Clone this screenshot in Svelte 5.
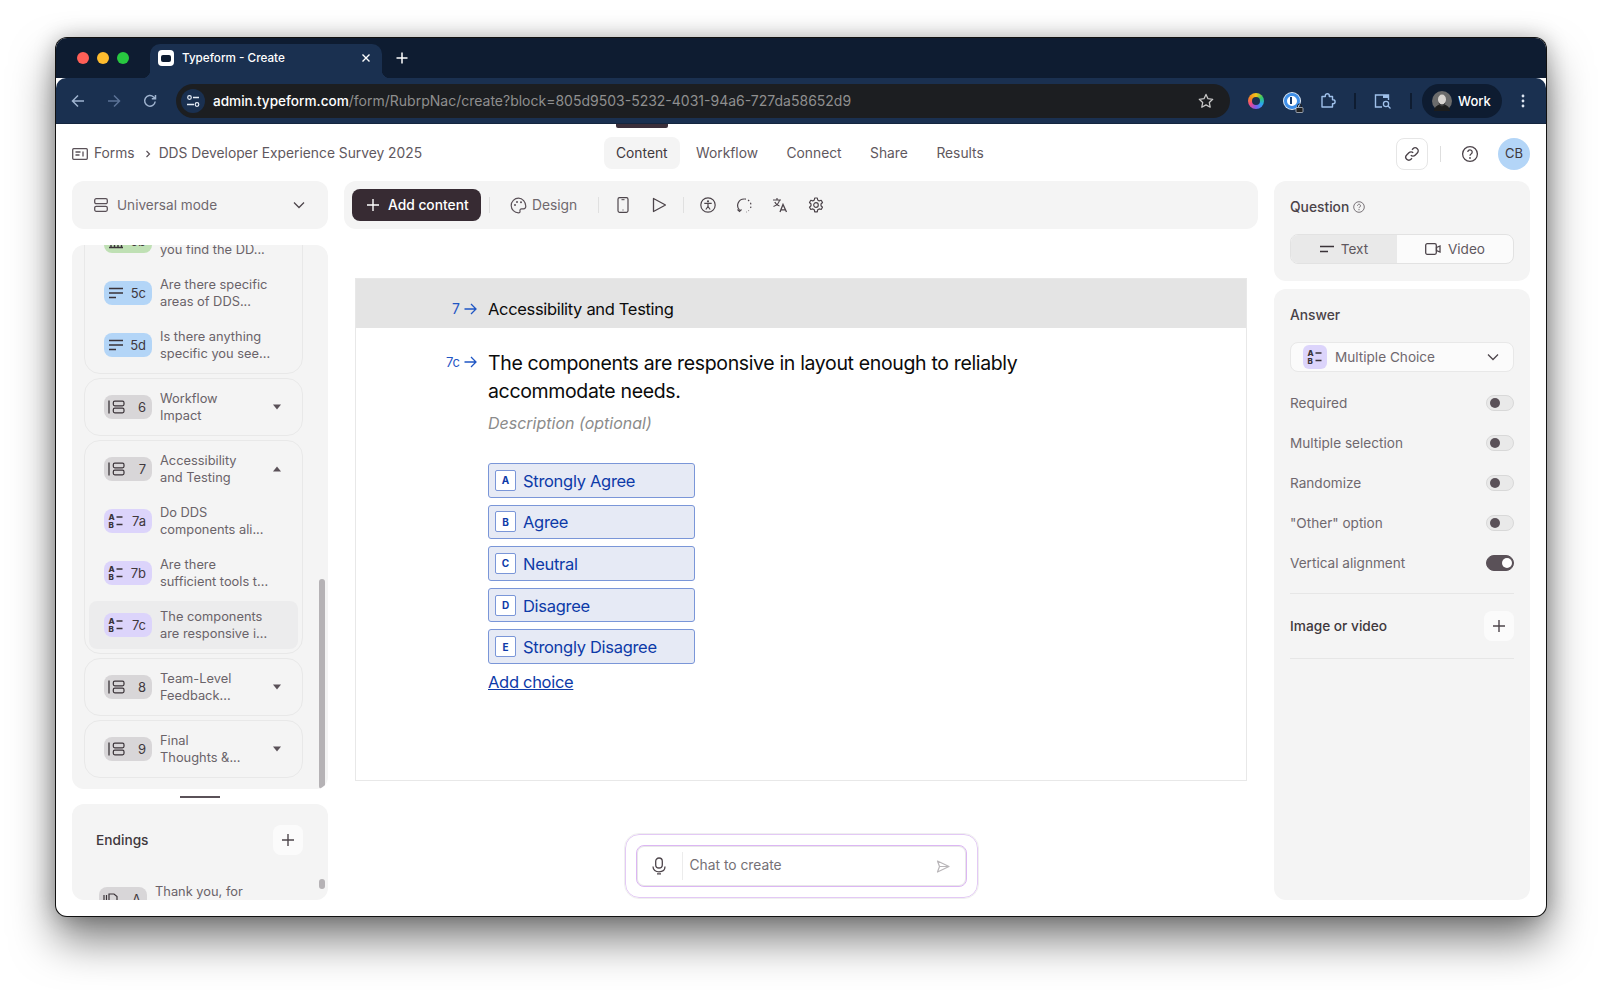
<script>
  const introRows = [
    { t: 'rate', n: '5b', a: '\u00a0', b: 'you find the DD...' },
    { t: 'text', n: '5c', a: 'Are there specific', b: 'areas of DDS...' },
    { t: 'text', n: '5d', a: 'Is there anything', b: 'specific you see...' }
  ];
  const subRows = [
    { t: 'mc', n: '7a', a: 'Do DDS', b: 'components ali...' },
    { t: 'mc', n: '7b', a: 'Are there', b: 'sufficient tools t...' },
    { t: 'mc', n: '7c', a: 'The components', b: 'are responsive i...', on: true }
  ];
  const choices = [
    ['A', 'Strongly Agree'], ['B', 'Agree'], ['C', 'Neutral'], ['D', 'Disagree'], ['E', 'Strongly Disagree']
  ];
  const toggles = [
    ['Required', false], ['Multiple selection', false], ['Randomize', false], ['"Other" option', false], ['Vertical alignment', true]
  ];
  const nav = ['Content', 'Workflow', 'Connect', 'Share', 'Results'];
</script>

{#snippet mcIcon()}
  <svg width="16" height="16" viewBox="0 0 16 16" class="ico">
    <text x="0.5" y="7" class="mini">A</text><text x="0.5" y="14.5" class="mini">B</text>
    <path d="M8.500 4h6M8.500 11.500h6" stroke="#3a3338" stroke-width="1.500" fill="none"/>
  </svg>
{/snippet}

{#snippet chip(type, n)}
  <span class="chip {type}">
    {#if type === 'text'}
      <svg width="16" height="16" viewBox="0 0 16 16" class="ico"><path d="M1 3.500h14M1 8h14M1 12.500h7" stroke="#3a3338" stroke-width="1.400" fill="none"/></svg>
    {:else if type === 'group'}
      <svg width="17" height="16" viewBox="0 0 17 16" class="ico"><path d="M1 1.500v13" stroke="#3a3338" stroke-width="1.300"/><rect x="5.300" y="2.200" width="10.700" height="4.600" rx="1.500" fill="none" stroke="#3a3338" stroke-width="1.200"/><rect x="5.300" y="9.200" width="10.700" height="4.600" rx="1.500" fill="none" stroke="#3a3338" stroke-width="1.200"/></svg>
    {:else if type === 'mc'}
      {@render mcIcon()}
    {:else if type === 'rate'}
      <svg width="16" height="16" viewBox="0 0 16 16" class="ico"><path d="M3 6v8M6.500 6v8M10 6v8M13.500 6v8M1 14.500h14" stroke="#3a3338" stroke-width="1.400" fill="none"/></svg>
    {:else}
      <svg width="16" height="16" viewBox="0 0 16 16" class="ico"><path d="M1 4v9M3.500 4v9" stroke="#3a3338" stroke-width="1.200"/><path d="M6 3h5l3 2.500V13H6z" fill="none" stroke="#3a3338" stroke-width="1.200"/></svg>
    {/if}
    <span class="num">{n}</span>
  </span>
{/snippet}

{#snippet row(r)}
  <div class="row" class:on={r.on}>
    {@render chip(r.t, r.n)}
    <span class="rowtext"><span>{r.a}</span><span>{r.b}</span></span>
  </div>
{/snippet}

{#snippet group(n, a, b, open)}
  <div class="row">
    {@render chip('group', n)}
    <span class="rowtext"><span>{a}</span><span>{b}</span></span>
    <svg class="caret" width="10" height="6" viewBox="0 0 10 6">
      {#if open}<path d="M5 .5 9 5.500H1z" fill="#5a5158"/>{:else}<path d="M1 .5h8L5 5.500z" fill="#5a5158"/>{/if}
    </svg>
  </div>
{/snippet}

{#snippet plus()}
  <svg width="14" height="14" viewBox="0 0 14 14"><path d="M7 1v12M1 7h12" stroke="currentColor" stroke-width="1.400" fill="none"/></svg>
{/snippet}

{#snippet arrow()}
  <svg width="13" height="12" viewBox="0 0 13 12"><path d="M.5 6h11.500M7 1l5 5-5 5" stroke="#1f56c4" stroke-width="1.300" fill="none"/></svg>
{/snippet}

<div class="window">
  <div class="tabstrip">
    <div class="lights"><i class="r"></i><i class="y"></i><i class="g"></i></div>
    <div class="tab">
      <span class="fav"><b></b></span>
      <span class="tabtitle">Typeform - Create</span>
      <svg width="10" height="10" viewBox="0 0 10 10"><path d="M1.500 1.500l7 7M8.500 1.500l-7 7" stroke="#fff" stroke-width="1.400"/></svg>
    </div>
    <svg class="newtab" width="12" height="12" viewBox="0 0 12 12"><path d="M6 .5v11M.5 6h11" stroke="#fff" stroke-width="1.500"/></svg>
  </div>

  <div class="toolbar">
    <div class="navbtns">
      <svg width="14" height="14" viewBox="0 0 14 14"><path d="M13 7H1.500M7 1.500 1.500 7 7 12.500" stroke="#9fb3cf" stroke-width="1.500" fill="none"/></svg>
      <svg width="14" height="14" viewBox="0 0 14 14"><path d="M1 7h11.500M7 1.500 12.500 7 7 12.500" stroke="#5b7296" stroke-width="1.500" fill="none"/></svg>
      <svg width="14" height="14" viewBox="0 0 14 14"><path d="M12.200 7.500A5.300 5.300 0 1 1 10.600 3L12.500 4.800M12.500 1v3.800H8.800" stroke="#9fb3cf" stroke-width="1.500" fill="none"/></svg>
    </div>
    <div class="urlbar">
      <span class="sitechip">
        <svg width="14" height="14" viewBox="0 0 14 14"><circle cx="3.500" cy="3.500" r="1.800" fill="none" stroke="#e6edf7" stroke-width="1.200"/><path d="M7 3.500h6M1 10.500h7" stroke="#e6edf7" stroke-width="1.400"/><circle cx="11" cy="10.500" r="1.800" fill="none" stroke="#e6edf7" stroke-width="1.200"/></svg>
      </span>
      <span class="url"><b>admin.typeform.com</b><span>/form/RubrpNac/create?block=805d9503-5232-4031-94a6-727da58652d9</span></span>
      <svg width="16" height="16" viewBox="0 0 16 16"><path d="M8 1.400l2 4.300 4.700.6-3.400 3.200.9 4.700L8 11.900 3.800 14.200l.9-4.700L1.300 6.300 6 5.700z" fill="none" stroke="#c7c7c7" stroke-width="1.300" stroke-linejoin="round"/></svg>
    </div>
    <div class="exts">
      <span class="wheel"></span>
      <span class="onepw"><i></i><svg width="9" height="10" viewBox="0 0 9 10"><path d="M2.500 4.500V3a2 2 0 0 1 4 0v1.500" stroke="#222" fill="none"/><rect x="1" y="4.500" width="7" height="5" rx="1" fill="#222" stroke="#e8eef6" stroke-width=".6"/></svg></span>
      <svg width="16" height="17" viewBox="0 0 16 17"><path d="M2 4.500h3.300v-.8a2 2 0 0 1 4 0v.8h3.200v3.200h.6a2 2 0 0 1 0 4h-.6v3.300H2z" fill="none" stroke="#9fc0ea" stroke-width="1.400" stroke-linejoin="round"/></svg>
      <i class="tsep"></i>
      <svg width="18" height="16" viewBox="0 0 18 16"><path d="M8 14H1.500V2h13v5" fill="none" stroke="#9fc0ea" stroke-width="1.400"/><rect x="9" y="2" width="6" height="3" fill="#9fc0ea"/><circle cx="12" cy="11" r="2.600" fill="none" stroke="#9fc0ea" stroke-width="1.300"/><path d="M14 13l2.500 2.500" stroke="#9fc0ea" stroke-width="1.300"/></svg>
      <i class="tsep"></i>
      <span class="profile">
        <svg width="20" height="20" viewBox="0 0 20 20"><circle cx="10" cy="10" r="10" fill="#6b6b6b"/><path d="M2 20c.5-5 4-6.500 8-6.500s7.500 1.500 8 6.500z" fill="#1d1d1d"/><ellipse cx="10" cy="8.500" rx="4" ry="5" fill="#d8d4d0"/><path d="M6.500 10c1 5 6 5 7 0l-.5 4-3 1.500L7 14z" fill="#3a3a3a"/></svg>
        <span>Work</span>
      </span>
      <svg class="dots" width="4" height="14" viewBox="0 0 4 14"><circle cx="2" cy="2" r="1.400" fill="#dde6f2"/><circle cx="2" cy="7" r="1.400" fill="#dde6f2"/><circle cx="2" cy="12" r="1.400" fill="#dde6f2"/></svg>
    </div>
  </div>

  <div class="page">
    <header class="topbar">
      <div class="crumbs">
        <svg width="16" height="14" viewBox="0 0 16 14"><rect x=".7" y="1.700" width="14.600" height="10.600" rx="1" fill="none" stroke="#5a5158" stroke-width="1.300"/><path d="M3.500 5h5M3.500 8h4M11 4.500v5" stroke="#5a5158" stroke-width="1.300" fill="none"/></svg>
        <span class="forms">Forms</span>
        <svg class="sep" width="6" height="8" viewBox="0 0 6 8"><path d="M1.500 1l3 3-3 3" stroke="#5a5158" stroke-width="1.200" fill="none"/></svg>
        <span>DDS Developer Experience Survey 2025</span>
      </div>
      <nav class="tabs">
        {#each nav as item, i}
          <span class="navitem" class:active={i === 0}>{item}</span>
        {/each}
      </nav>
      <div class="topright">
        <span class="linkbtn"><svg width="16" height="16" viewBox="0 0 16 16"><path d="M6.800 9.200a3 3 0 0 0 4.300 0l2.200-2.200a3 3 0 0 0-4.300-4.300L8 3.700M9.200 6.800a3 3 0 0 0-4.300 0L2.700 9a3 3 0 0 0 4.300 4.300L8 12.300" fill="none" stroke="#4d454b" stroke-width="1.400"/></svg></span>
        <i class="vsep"></i>
        <svg width="18" height="18" viewBox="0 0 18 18"><circle cx="9" cy="9" r="7.400" fill="none" stroke="#4d454b" stroke-width="1.300"/><path d="M6.800 7a2.200 2.200 0 1 1 3.300 2c-.7.400-1.100.8-1.100 1.700" fill="none" stroke="#4d454b" stroke-width="1.300"/><circle cx="9" cy="13" r=".9" fill="#4d454b"/></svg>
        <span class="avatar">CB</span>
      </div>
    </header>

    <div class="columns">
      <aside class="leftcol">
        <div class="panel modebar">
          <svg width="14" height="14" viewBox="0 0 14 14"><rect x=".7" y=".7" width="12.600" height="5" rx="1.500" fill="none" stroke="#5a5158" stroke-width="1.300"/><rect x=".7" y="8.300" width="12.600" height="5" rx="1.500" fill="none" stroke="#5a5158" stroke-width="1.300"/></svg>
          <span class="lift">Universal mode</span>
          <svg class="chev" width="12" height="8" viewBox="0 0 12 8"><path d="M1 1.500l5 5 5-5" stroke="#4d454b" stroke-width="1.300" fill="none"/></svg>
        </div>
        <div class="panel listpanel">
          <div class="list">
            <div class="grp">{#each introRows as r}{@render row(r)}{/each}</div>
            <div class="grp">{@render group('6', 'Workflow', 'Impact', false)}</div>
            <div class="grp">
              {@render group('7', 'Accessibility', 'and Testing', true)}
              {#each subRows as r}{@render row(r)}{/each}
            </div>
            <div class="grp">{@render group('8', 'Team-Level', 'Feedback...', false)}</div>
            <div class="grp">{@render group('9', 'Final', 'Thoughts &...', false)}</div>
          </div>
          <i class="thumb listthumb"></i>
        </div>
        <i class="handle"></i>
        <div class="panel endings">
          <div class="endhead">
            <span class="strong lift">Endings</span>
            <span class="plusbtn">{@render plus()}</span>
          </div>
          <div class="endrow">
            {@render chip('end', 'A')}
            <span class="rowtext"><span>Thank you, for</span></span>
          </div>
          <i class="thumb endthumb"></i>
        </div>
      </aside>

      <main class="center">
        <div class="panel actions">
          <span class="addbtn">{@render plus()}<span class="lift">Add content</span></span>
          <i class="asep"></i>
          <span class="design">
            <svg width="17" height="17" viewBox="0 0 17 17"><path d="M8.500 1.200a7.300 7.300 0 1 0 0 14.600c1.200 0 1.700-.8 1.500-1.700-.3-1.200.3-2.300 1.700-2.300h1.800c1.300 0 2.300-1 2.300-2.500 0-4.400-3.300-8.100-7.300-8.100z" fill="none" stroke="#5a5158" stroke-width="1.200"/><circle cx="5" cy="8" r="1" fill="#5a5158"/><circle cx="7" cy="5" r="1" fill="#5a5158"/><circle cx="11" cy="5.200" r="1" fill="#5a5158"/></svg>
            <span class="lift">Design</span>
          </span>
          <i class="asep"></i>
          <span class="tool first"><svg width="12" height="16" viewBox="0 0 12 16"><rect x="1" y=".7" width="10" height="14.600" rx="1.500" fill="none" stroke="#4d454b" stroke-width="1.200"/><path d="M4.500 2.700h3M5.500 13h1" stroke="#4d454b" stroke-width="1"/></svg></span>
          <span class="tool"><svg width="15" height="16" viewBox="0 0 15 16"><path d="M1.500 1.500 13.500 8 1.500 14.500z" fill="none" stroke="#4d454b" stroke-width="1.300" stroke-linejoin="round"/></svg></span>
          <i class="asep tight"></i>
          <span class="tool"><svg width="16" height="16" viewBox="0 0 16 16"><circle cx="8" cy="8" r="7.200" fill="none" stroke="#4d454b" stroke-width="1.200"/><circle cx="8" cy="4.300" r="1.100" fill="#4d454b"/><path d="M4.300 6.300h7.400M8 6.500V9.500M8 9.500 5.800 12.500M8 9.500l2.200 3" stroke="#4d454b" stroke-width="1.200" fill="none"/></svg></span>
          <span class="tool"><svg width="17" height="17" viewBox="0 0 17 17"><path d="M3.500 13A6.500 6.500 0 0 1 8.500 2" fill="none" stroke="#4d454b" stroke-width="1.200"/><path d="M8.500 2a6.500 6.500 0 0 1 6 9M13 13.500l-.5.300M10.500 15h-.5" fill="none" stroke="#4d454b" stroke-width="1.200" stroke-dasharray="1.500 2.200"/><path d="M1.500 11.500l2 2 2-2" fill="none" stroke="#4d454b" stroke-width="1.200" transform="translate(0 1)"/></svg></span>
          <span class="tool"><svg width="16" height="16" viewBox="0 0 16 16"><path d="M1 3h8M5 1v2M7.500 3C7 6 4.500 8.500 1.500 9.500M2.800 5c.8 2 2.700 3.500 4.700 4" fill="none" stroke="#4d454b" stroke-width="1.200"/><path d="M8 15l3-7.500 3.500 7.500M9 12.800h4.500" fill="none" stroke="#4d454b" stroke-width="1.300"/></svg></span>
          <span class="tool"><svg width="16" height="16" viewBox="0 0 16 16"><path d="M6.700 1h2.600l.4 2 1.500.9 2-.6 1.300 2.200-1.500 1.500v1.800l1.500 1.400-1.300 2.300-2-.6-1.500.9-.4 2H6.700l-.4-2-1.500-.9-2 .6L1.500 10.200 3 8.800V7L1.500 5.500l1.300-2.200 2 .6 1.500-.9z" fill="none" stroke="#4d454b" stroke-width="1.200" stroke-linejoin="round"/><circle cx="8" cy="8" r="2.300" fill="none" stroke="#4d454b" stroke-width="1.200"/></svg></span>
        </div>

        <section class="canvas">
          <div class="band">
            <span class="ref"><span class="refnum">7</span>{@render arrow()}</span>
            <span class="bandtitle">Accessibility and Testing</span>
          </div>
          <div class="qrow">
            <span class="ref qref"><span class="refnum small">7c</span>{@render arrow()}</span>
            <div class="qbody">
              <h1>The components are responsive in layout enough to reliably<br />accommodate needs.</h1>
              <p class="desc">Description (optional)</p>
              <div class="choices">
                {#each choices as [k, label]}
                  <div class="choice"><span class="key">{k}</span><span class="choicelabel">{label}</span></div>
                {/each}
              </div>
              <span class="addchoice">Add choice</span>
            </div>
          </div>
        </section>

        <div class="chatwrap">
          <div class="chat">
            <span class="mic"><svg width="16" height="18" viewBox="0 0 16 18"><rect x="4.700" y="1" width="6.600" height="10" rx="3.300" fill="none" stroke="#4d454b" stroke-width="1.300"/><path d="M2 9.500c0 3.500 2.700 5.300 6 5.300s6-1.800 6-5.300M6 16.800h4" fill="none" stroke="#4d454b" stroke-width="1.300"/></svg></span>
            <span class="chattext">Chat to create</span>
            <svg width="14" height="13" viewBox="0 0 14 13"><path d="M1.500 1 13 6.500 1.500 12 3.500 6.500zM3.500 6.500H13" fill="none" stroke="#b9b6b9" stroke-width="1.200" stroke-linejoin="round"/></svg>
          </div>
        </div>
      </main>

      <aside class="rightcol">
        <div class="panel questionp">
          <div class="ptitle"><span class="lift">Question</span>
            <svg width="12" height="12" viewBox="0 0 12 12"><circle cx="6" cy="6" r="5.300" fill="none" stroke="#6b646a" stroke-width=".9"/><path d="M4.500 4.700A1.500 1.500 0 1 1 6.800 6c-.5.300-.8.500-.8 1.100" fill="none" stroke="#6b646a" stroke-width=".9"/><circle cx="6" cy="8.700" r=".6" fill="#6b646a"/></svg>
          </div>
          <div class="segment">
            <span class="seg sel"><svg width="14" height="8" viewBox="0 0 14 8"><path d="M0 1.500h14M0 6.500h8" stroke="#3a3338" stroke-width="1.300"/></svg><span class="lift">Text</span></span>
            <span class="seg"><svg width="16" height="12" viewBox="0 0 16 12"><rect x=".7" y=".7" width="10.600" height="10.600" rx="1.500" fill="none" stroke="#4d454b" stroke-width="1.300"/><path d="M11.500 4.500 15 3v6l-3.500-1.500z" fill="none" stroke="#4d454b" stroke-width="1.300"/></svg><span class="lift">Video</span></span>
          </div>
        </div>
        <div class="panel answerp">
          <div class="ptitle"><span class="lift">Answer</span></div>
          <div class="select">
            <span class="mcbadge">{@render mcIcon()}</span>
            <span class="lift">Multiple Choice</span>
            <svg class="chev" width="12" height="8" viewBox="0 0 12 8"><path d="M1 1.500l5 5 5-5" stroke="#4d454b" stroke-width="1.300" fill="none"/></svg>
          </div>
          <div class="toggles">
            {#each toggles as [label, on]}
              <div class="togglerow"><span class="lift">{label}</span><i class="toggle" class:ison={on}><b></b></i></div>
            {/each}
          </div>
          <div class="media">
            <span class="strong lift">Image or video</span>
            <span class="plusbtn">{@render plus()}</span>
          </div>
        </div>
      </aside>
    </div>
  </div>
</div>

<style>
  :global(body) { margin: 0; background: #fff; overflow: hidden; }
  :global(#app) { height: 990px; }
  * { box-sizing: border-box; }
  i { display: block; font-style: normal; }
  svg { display: block; flex: none; }
  .lift { margin-top: -1px; }

  .window {
    position: relative; top: 38px; left: 56px; width: 1490px; height: 878px;
    border-radius: 11px; overflow: hidden; background: #fff;
    font-family: Inter, "Liberation Sans", sans-serif; color: #5f585e;
    box-shadow: 0 0 0 1px #111, 0 24px 44px rgba(0,0,0,.5), 0 0 22px rgba(0,0,0,.28);
  }

  .tabstrip { height: 40px; background: #0e1c31; display: flex; align-items: flex-end; }
  .lights { display: flex; gap: 8px; width: 94px; padding: 0 0 14px 21px; }
  .lights i { width: 12px; height: 12px; border-radius: 50%; }
  .r { background: #ff5f57; } .y { background: #febc2e; } .g { background: #28c840; }
  .tab {
    position: relative; width: 232px; height: 34px; background: #1a3050; border-radius: 10px 10px 0 0;
    display: flex; align-items: center; padding: 0 11px 6px 8px; color: #fff;
  }
  .tab::before, .tab::after { content: ""; position: absolute; bottom: 0; width: 8px; height: 8px; }
  .tab::before { left: -8px; background: radial-gradient(circle at 0 0, transparent 8px, #1a3050 8.500px); }
  .tab::after { right: -8px; background: radial-gradient(circle at 100% 0, transparent 8px, #1a3050 8.500px); }
  .fav { width: 16px; height: 16px; border-radius: 4px; background: #fff; display: flex; align-items: center; justify-content: center; }
  .fav b { width: 10px; height: 7px; border-radius: 2px; background: #0e1c31; }
  .tabtitle { flex: 1; margin: 0 0 0 8px; font-size: 11.700px; font-weight: 500; }
  .newtab { margin: 0 0 14px 14px; }

  .toolbar { height: 46px; background: #1a3050; display: flex; align-items: center; border-bottom: 1px solid #14263f; border-top-left-radius: 10px; border-top-right-radius: 10px; }
  .navbtns { display: flex; gap: 22px; width: 120px; padding-left: 15px; }
  .urlbar { width: 1054px; height: 34px; border-radius: 17px; background: #1c1e21; display: flex; align-items: center; padding: 0 16px 0 5px; }
  .sitechip { width: 24px; height: 24px; border-radius: 50%; background: #1a3050; display: flex; align-items: center; justify-content: center; }
  .url { flex: 1; margin-left: 8px; font-size: 14px; color: #8f8f8f; white-space: nowrap; }
  .url b { font-weight: 500; font-size: 13.600px; color: #fff; }
  .exts { display: flex; align-items: center; flex: 1; padding-left: 18px; }
  .wheel { width: 16px; height: 16px; border-radius: 50%; background: conic-gradient(#f5c518, #31c86b, #2aa6f0, #7a5cf0, #f0478a, #f58a1f, #f5c518); position: relative; margin-right: 20px; }
  .wheel::after { content: ""; position: absolute; inset: 4px; border-radius: 50%; background: #1a3050; }
  .onepw { position: relative; width: 16px; height: 16px; border-radius: 50%; background: #fff; border: 3px solid #3f8fe8; box-shadow: 0 0 0 1px #dfeaf7; margin-right: 20px; }
  .onepw i { position: absolute; left: 3px; top: 1px; width: 2px; height: 7px; background: #173a6b; }
  .onepw svg { position: absolute; right: -7px; bottom: -7px; }
  .tsep { width: 2px; height: 16px; background: #0e1c31; margin: 0 18px; }
  .profile { width: 80px; height: 34px; border-radius: 17px; background: #0e1c31; color: #fff; display: flex; align-items: center; gap: 6px; padding-left: 10px; font-size: 13px; font-weight: 500; margin-left: -8px; }
  .dots { margin-left: 19px; }

  .page { height: 792px; display: flex; flex-direction: column; }
  .topbar { height: 57px; flex: none; position: relative; display: flex; align-items: center; justify-content: space-between; padding: 2px 16px 0 16px; font-size: 13.800px; }
  .crumbs { display: flex; align-items: center; }
  .crumbs span { margin-top: -2px; }
  .forms { margin-left: 6px; }
  .sep { margin: 0 8px 0 10px; }
  .tabs { position: absolute; left: 548px; top: 13px; display: flex; gap: 4.500px; }
  .navitem { height: 32px; padding: 0 12px 1px 12px; border-radius: 8px; display: flex; align-items: center; position: relative; }
  .navitem.active { background: #f4f4f4; color: #3f383d; }
  .navitem.active::before { content: ""; position: absolute; left: 12px; right: 12px; top: -13px; height: 4px; background: #3b2f3a; border-radius: 0 0 2px 2px; }
  .topright { display: flex; align-items: center; }
  .linkbtn { width: 32px; height: 32px; border: 1px solid #e6e6e6; border-radius: 8px; display: flex; align-items: center; justify-content: center; }
  .vsep { width: 1px; height: 16px; background: #dedede; margin: 0 20px 0 12px; }
  .avatar { width: 32px; height: 32px; margin-left: 19px; border-radius: 50%; background: #b3d5f7; color: #3f383d; font-size: 13px; padding-bottom: 2px; display: flex; align-items: center; justify-content: center; }

  .columns { flex: 1; min-height: 0; display: grid; grid-template-columns: 256px 1fr 256px; gap: 16px; padding: 0 16px 16px 16px; }
  .panel { background: #f4f4f4; border-radius: 12px; }
  .leftcol { display: flex; flex-direction: column; min-height: 0; }
  .modebar { height: 48px; flex: none; display: flex; align-items: center; gap: 9px; padding: 0 23px 0 22px; font-size: 13.600px; color: #6f686e; }
  .chev { margin-left: auto; }
  .listpanel { position: relative; height: 544px; flex: none; margin-top: 16px; overflow: hidden; }
  .list { display: flex; flex-direction: column; gap: 4px; width: 219px; margin: -33px 0 0 12px; }
  .grp { border: 1px solid #e8e8e8; border-radius: 16px; padding: 4px; display: flex; flex-direction: column; gap: 4px; }
  .row { height: 48px; border-radius: 8px; display: flex; align-items: center; padding: 0 14px 0 15px; flex: none; }
  .row.on { background: #ececed; }
  .chip { width: 48px; height: 24px; border-radius: 8px; display: flex; align-items: center; justify-content: space-between; padding: 0 6px 0 4px; flex: none; color: #3f383d; font-size: 13px; }
  .chip.text { background: #b3d5f7; }
  .chip.group, .chip.end { background: #d8d6d8; }
  .chip.mc { background: #dcd4fb; }
  .chip.rate { background: #bfe0b4; }
  .ico { flex: none; }
  .mini { font: 800 8px Inter, "Liberation Sans", sans-serif; fill: #3a3338; }
  .rowtext { display: flex; flex-direction: column; margin-left: 8px; font-size: 12.850px; line-height: 17px; color: #6a6369; white-space: nowrap; flex: 1; }
  .caret { margin-right: 2px; }
  .thumb { position: absolute; right: 3px; width: 6px; background: #b5b2b5; border-radius: 3px; }
  .listthumb { top: 334px; bottom: 0; }
  .handle { width: 40px; height: 2px; background: #5a5158; margin: 7px 0 6px 108px; flex: none; }
  .endings { position: relative; height: 96px; flex: none; overflow: hidden; padding: 21px 25px 0 24px; }
  .endhead { display: flex; align-items: center; justify-content: space-between; height: 30px; }
  .strong { font-size: 13.700px; font-weight: 500; color: #3f383d; }
  .plusbtn { width: 30px; height: 30px; border-radius: 8px; background: #fbfbfb; color: #4d454b; display: flex; align-items: center; justify-content: center; }
  .endrow { display: flex; margin: 28px 0 0 3px; }
  .endrow .chip { margin-top: 4px; }
  .endthumb { top: 75px; height: 10px; }

  .center { min-width: 0; display: flex; flex-direction: column; }
  .actions { height: 48px; flex: none; display: flex; align-items: center; padding-left: 8px; }
  .addbtn { width: 129px; height: 32px; border-radius: 8px; background: #372b33; color: #fff; font-size: 13.800px; font-weight: 500; display: flex; align-items: center; gap: 8px; padding-left: 14px; }
  .asep { width: 1px; height: 16px; background: #e0e0e0; margin: 0 8px; flex: none; }
  .asep.tight { margin: 0 6px; }
  .design { display: flex; align-items: center; gap: 5px; font-size: 13.800px; color: #6f686e; width: 92px; padding-left: 12px; }
  .tool { width: 36px; display: flex; justify-content: center; }
  .tool.first { width: 32px; margin-right: 2px; }

  .canvas { height: 503px; flex: none; margin: 49px 11px 0 11px; border: 1px solid #e8e8e8; background: #fff; color: #0b0b0b; }
  .band { height: 49px; padding-top: 10px; background: #e4e4e4; display: flex; align-items: center; }
  .ref { width: 132px; padding-right: 11px; display: flex; justify-content: flex-end; align-items: center; gap: 4px; flex: none; color: #1f56c4; }
  .refnum { font-size: 14px; }
  .refnum.small { font-size: 13px; }
  .bandtitle { font-size: 16.500px; letter-spacing: -.33px; }
  .qrow { display: flex; padding-top: 21px; }
  .qref { height: 26px; }
  .qbody { flex: 1; }
  h1 { margin: 0; font-size: 19.500px; line-height: 28px; font-weight: 400; letter-spacing: -.35px; }
  .desc { margin: 6px 0 0; font-size: 16px; line-height: 24px; font-style: italic; color: #8b8b8b; }
  .choices { margin-top: 28px; display: flex; flex-direction: column; gap: 7px; width: 207px; }
  .choice { height: 34.600px; border: 1px solid #7a96d8; border-radius: 3px; background: #e6eaf5; color: #0d3aa8; font-size: 16.500px; letter-spacing: -.3px; display: flex; align-items: center; gap: 7px; padding-left: 6px; }
  .choicelabel { margin-top: 1px; }
  .key { width: 21px; height: 21px; border: 1px solid #7a96d8; border-radius: 2px; background: #fff; font-size: 10px; font-weight: 700; letter-spacing: 0; display: flex; align-items: center; justify-content: center; }
  .addchoice { display: block; margin-top: 8px; font-size: 16.500px; letter-spacing: -.3px; line-height: 20px; color: #0d3aa8; text-decoration: underline; }

  .chatwrap { width: 353px; height: 64px; margin: 53px auto 0; padding: 10px; border: 1px solid #e3c9f5; outline: 1px solid #efefef; border-radius: 14px; background: #fff; }
  .chat { height: 42px; border: 1px solid #dcb6f3; border-radius: 8px; box-shadow: inset 0 0 0 1px #e8e8e8; display: flex; align-items: center; padding-right: 16px; }
  .mic { width: 46px; height: 28px; border-right: 1px solid #ececec; display: flex; align-items: center; justify-content: center; margin-right: 7px; }
  .chattext { flex: 1; margin-top: -2px; font-size: 13.800px; color: #757075; }

  .rightcol { display: flex; flex-direction: column; gap: 8px; min-height: 0; }
  .questionp { height: 100px; flex: none; padding: 16px; }
  .ptitle { display: flex; align-items: center; gap: 4px; height: 20px; font-size: 13.800px; font-weight: 500; color: #4a4348; }
  .segment { margin-top: 17px; height: 30px; display: flex; border: 1px solid #e2e2e2; border-radius: 8px; overflow: hidden; background: #fbfbfb; }
  .seg { flex: 1; display: flex; align-items: center; justify-content: center; gap: 7px; font-size: 13.600px; color: #5f585e; }
  .seg.sel { background: #e9e9e9; flex: none; width: 106px; }
  .answerp { flex: 1; padding: 16px; }
  .select { margin-top: 17px; height: 30px; background: #fbfbfb; border: 1px solid #e8e8e8; border-radius: 8px; display: flex; align-items: center; gap: 8px; padding: 0 14px 0 12px; font-size: 13.600px; color: #6f686e; }
  .mcbadge { width: 24px; height: 24px; border-radius: 6px; background: #dcd4fb; display: flex; align-items: center; justify-content: center; }
  .toggles { margin-top: 11px; border-bottom: 1px solid #e6e6e6; padding-bottom: 10px; }
  .togglerow { height: 40px; display: flex; align-items: center; justify-content: space-between; font-size: 13.600px; color: #6f686e; }
  .toggle { width: 28px; height: 16px; border-radius: 8px; background: #e9e9e9; border: 1px solid #d8d8d8; position: relative; }
  .toggle b { position: absolute; left: 2.500px; top: 2px; width: 10px; height: 10px; border-radius: 50%; background: #5a5158; }
  .toggle.ison { background: #5a5158; border-color: #5a5158; }
  .toggle.ison b { left: 15px; background: #fff; }
  .media { height: 65px; display: flex; align-items: center; justify-content: space-between; border-bottom: 1px solid #e6e6e6; }
</style>
